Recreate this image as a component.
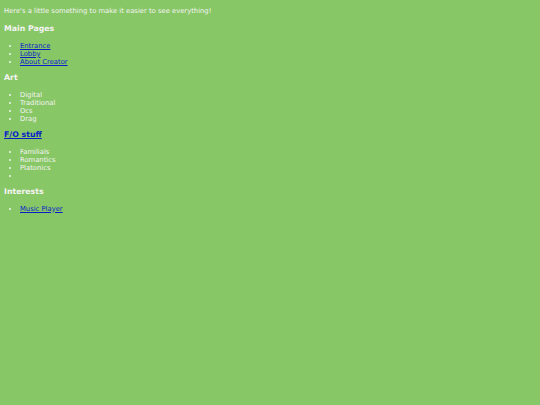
const sections: { title: string; link?: boolean; items: { label: string; link?: boolean }[] }[] = [
  {
    title: "Main Pages",
    items: [
      { label: "Entrance", link: true },
      { label: "Lobby", link: true },
      { label: "About Creator", link: true },
    ],
  },
  {
    title: "Art",
    items: [{ label: "Digital" }, { label: "Traditional" }, { label: "Ocs" }, { label: "Drag" }],
  },
  {
    title: "F/O stuff",
    link: true,
    items: [{ label: "Familials" }, { label: "Romantics" }, { label: "Platonics" }, { label: "" }],
  },
  {
    title: "Interests",
    items: [{ label: "Music Player", link: true }],
  },
];

export default function App() {
  return (
    <div className="min-h-[405px] bg-[#88c766] px-[4px] pt-[7px] font-['DejaVu_Sans',sans-serif] text-[6.8px] leading-[8px] text-[#f4f4f4]">
      <p>Here's a little something to make it easier to see everything!</p>
      {sections.map((s, n) => (
        <div key={s.title}>
          <h3 className={`${n === 0 ? "mt-[9px]" : "mt-[7.5px]"} mb-[7.5px] text-[7.8px] leading-[10px] font-bold`}>
            {s.link ? <a href="#" className="text-[#0a1ec8] underline">{s.title}</a> : s.title}
          </h3>
          <ul className="list-disc pl-[16px]">
            {s.items.map((it, i) => (
              <li key={i} className="h-[8px]">
                {it.link ? <a href="#" className="text-[#0a1ec8] underline">{it.label}</a> : it.label}
              </li>
            ))}
          </ul>
        </div>
      ))}
    </div>
  );
}
